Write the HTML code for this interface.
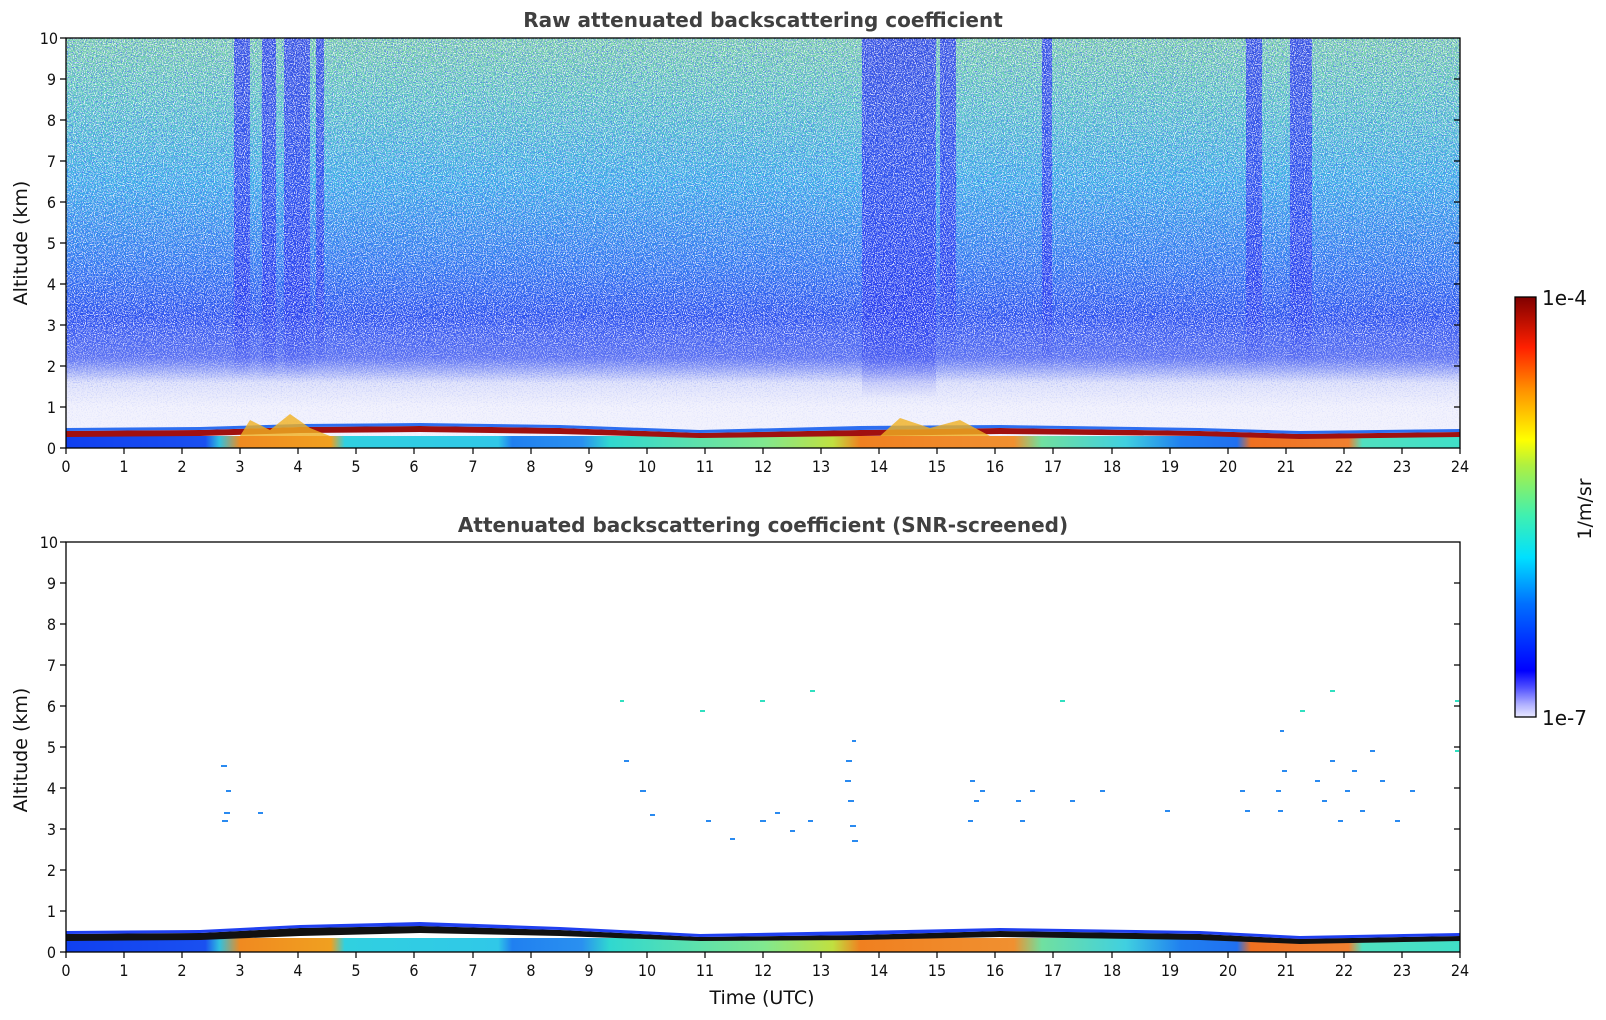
<!DOCTYPE html>
<html><head><meta charset="utf-8"><style>
html,body{margin:0;padding:0;background:#fff;}
svg{display:block;}
text{font-family:"DejaVu Sans","Liberation Sans",sans-serif;fill:#111;}
.t{font-size:16px;font-stretch:condensed;}
.ti{font-size:20px;font-weight:bold;fill:#404040;}
.lab{font-size:19px;}
</style></head><body>
<svg width="1606" height="1020" viewBox="0 0 1606 1020" xmlns="http://www.w3.org/2000/svg">
<defs>
<linearGradient id="bg" x1="0" y1="0" x2="0" y2="1">
<stop offset="0" stop-color="#7fd6a6"/>
<stop offset="0.15" stop-color="#62cfc0"/>
<stop offset="0.35" stop-color="#3cb4e6"/>
<stop offset="0.55" stop-color="#2f7cef"/>
<stop offset="0.68" stop-color="#2a50ee"/>
<stop offset="0.78" stop-color="#5f74f2"/>
<stop offset="0.84" stop-color="#dfe2fb"/>
<stop offset="0.9" stop-color="#f2f2fd"/>
<stop offset="1" stop-color="#f2f2fd"/>
</linearGradient>
<linearGradient id="fade" x1="0" y1="0" x2="0" y2="1">
<stop offset="0" stop-color="#fff"/>
<stop offset="0.72" stop-color="#fff"/>
<stop offset="0.86" stop-color="#fff" stop-opacity="0.2"/>
<stop offset="1" stop-color="#fff" stop-opacity="0"/>
</linearGradient>
<mask id="m1" maskUnits="userSpaceOnUse" x="66" y="38" width="1394" height="410">
<rect x="66" y="38" width="1394" height="410" fill="url(#fade)"/>
</mask>
<linearGradient id="str" x1="0" y1="0" x2="0" y2="1">
<stop offset="0" stop-color="#2430ee" stop-opacity="0.8"/>
<stop offset="0.75" stop-color="#2430ee" stop-opacity="0.75"/>
<stop offset="1" stop-color="#2430ee" stop-opacity="0"/>
</linearGradient>
<linearGradient id="bl" x1="0" y1="0" x2="1" y2="0">
<stop offset="0" stop-color="#1040f0"/>
<stop offset="0.1" stop-color="#1a50f0"/>
<stop offset="0.11" stop-color="#30c0e0"/>
<stop offset="0.125" stop-color="#f08a20"/>
<stop offset="0.19" stop-color="#f0a020"/>
<stop offset="0.2" stop-color="#30d0e0"/>
<stop offset="0.31" stop-color="#30c8e8"/>
<stop offset="0.32" stop-color="#2080f0"/>
<stop offset="0.37" stop-color="#2a90f0"/>
<stop offset="0.39" stop-color="#30d8d0"/>
<stop offset="0.5" stop-color="#80e890"/>
<stop offset="0.55" stop-color="#c0e040"/>
<stop offset="0.57" stop-color="#f08020"/>
<stop offset="0.68" stop-color="#f09030"/>
<stop offset="0.7" stop-color="#70e0a0"/>
<stop offset="0.76" stop-color="#40d0e0"/>
<stop offset="0.8" stop-color="#2080f0"/>
<stop offset="0.84" stop-color="#2070f0"/>
<stop offset="0.85" stop-color="#f07020"/>
<stop offset="0.92" stop-color="#f08030"/>
<stop offset="0.93" stop-color="#50e0c0"/>
<stop offset="1" stop-color="#40e0c8"/>
</linearGradient>
<linearGradient id="cb" x1="0" y1="1" x2="0" y2="0">
<stop offset="0" stop-color="#e8e8ff"/>
<stop offset="0.03" stop-color="#b0b0ff"/>
<stop offset="0.07" stop-color="#5050ff"/>
<stop offset="0.11" stop-color="#0000ff"/>
<stop offset="0.27" stop-color="#0070ff"/>
<stop offset="0.38" stop-color="#00e0ff"/>
<stop offset="0.48" stop-color="#40f0b0"/>
<stop offset="0.6" stop-color="#b0f040"/>
<stop offset="0.66" stop-color="#ffff00"/>
<stop offset="0.78" stop-color="#ff9000"/>
<stop offset="0.88" stop-color="#ff2000"/>
<stop offset="1" stop-color="#800000"/>
</linearGradient>
<filter id="spw" x="0" y="0" width="100%" height="100%">
<feTurbulence type="fractalNoise" baseFrequency="0.9" numOctaves="1" seed="3"/>
<feColorMatrix type="matrix" values="0 0 0 0 1  0 0 0 0 1  0 0 0 0 1  9 0 0 0 -4.6"/>
</filter>
<filter id="spb" x="0" y="0" width="100%" height="100%">
<feTurbulence type="fractalNoise" baseFrequency="0.8" numOctaves="1" seed="11"/>
<feColorMatrix type="matrix" values="0 0 0 0 0.08  0 0 0 0 0.15  0 0 0 0 0.95  0 9 0 0 -4.6"/>
</filter>
</defs>

<text class="ti" x="763" y="27" text-anchor="middle">Raw attenuated backscattering coefficient</text>
<text class="ti" x="763" y="532" text-anchor="middle">Attenuated backscattering coefficient (SNR-screened)</text>

<!-- TOP PLOT -->
<rect x="66" y="38" width="1394" height="410" fill="url(#bg)"/>
<g fill="url(#str)">
<rect x="234" y="38" width="16" height="340"/>
<rect x="262" y="38" width="14" height="340"/>
<rect x="284" y="38" width="26" height="340"/>
<rect x="316" y="38" width="8" height="330"/>
<rect x="862" y="38" width="74" height="360"/>
<rect x="940" y="38" width="16" height="320"/>
<rect x="1042" y="38" width="10" height="330"/>
<rect x="1246" y="38" width="16" height="330"/>
<rect x="1290" y="38" width="22" height="330"/>
</g>
<g mask="url(#m1)">
<rect x="66" y="38" width="1394" height="410" filter="url(#spb)" opacity="0.7"/>
<rect x="66" y="38" width="1394" height="410" filter="url(#spw)" opacity="0.75"/>
</g>
<rect x="66" y="436" width="1394" height="12" fill="url(#bl)"/>
<path d="M66 431 L200 430 L300 427 L420 426 L560 428 L700 433 L860 430 L1000 428 L1200 431 L1300 434 L1460 432 L1460 437 L1300 439 L1200 436 L1000 434 L860 436 L700 438 L560 434 L420 432 L300 433 L200 436 L66 437 Z" fill="#a01010"/>
<path d="M66 431 L200 430 L300 427 L420 426 L560 428 L700 433 L860 430 L1000 428 L1200 431 L1300 434 L1460 432 L1460 429 L1300 431 L1200 428 L1000 425 L860 426 L700 430 L560 425 L420 423 L300 424 L200 427 L66 428 Z" fill="#2d6ef0"/>
<path d="M240 436 L250 420 L270 430 L290 414 L310 428 L330 436 Z M880 436 L900 418 L930 428 L960 420 L990 436 Z" fill="#f0b020" opacity="0.8"/>

<!-- BOTTOM PLOT -->
<rect x="66" y="542" width="1394" height="410" fill="#fff"/>
<rect x="66" y="938" width="1394" height="14" fill="url(#bl)"/>
<path d="M66 934 L200 933 L300 928 L420 926 L560 930 L700 937 L860 935 L1000 931 L1200 934 L1300 939 L1460 936 L1460 941 L1300 944 L1200 940 L1000 937 L860 940 L700 941 L560 936 L420 933 L300 936 L200 940 L66 941 Z" fill="#111"/>
<path d="M66 934 L200 933 L300 928 L420 926 L560 930 L700 937 L860 935 L1000 931 L1200 934 L1300 939 L1460 936 L1460 933 L1300 936 L1200 931 L1000 928 L860 931 L700 934 L560 927 L420 922 L300 925 L200 930 L66 931 Z" fill="#2040f0"/>
<g fill="#2a8af0">
<rect x="222" y="820" width="6" height="2"/><rect x="224" y="812" width="6" height="2"/><rect x="226" y="790" width="5" height="2"/><rect x="221" y="765" width="6" height="2"/><rect x="258" y="812" width="5" height="2"/>
<rect x="624" y="760" width="5" height="2"/><rect x="640" y="790" width="6" height="2"/><rect x="650" y="814" width="5" height="2"/><rect x="706" y="820" width="5" height="2"/><rect x="730" y="838" width="5" height="2"/>
<rect x="760" y="820" width="6" height="2"/><rect x="775" y="812" width="5" height="2"/><rect x="790" y="830" width="5" height="2"/><rect x="808" y="820" width="5" height="2"/>
<rect x="845" y="780" width="6" height="2"/><rect x="848" y="800" width="6" height="2"/><rect x="850" y="825" width="6" height="2"/><rect x="852" y="840" width="6" height="2"/><rect x="846" y="760" width="6" height="2"/><rect x="852" y="740" width="4" height="2"/>
<rect x="970" y="780" width="5" height="2"/><rect x="974" y="800" width="5" height="2"/><rect x="980" y="790" width="5" height="2"/><rect x="968" y="820" width="5" height="2"/><rect x="1016" y="800" width="5" height="2"/><rect x="1020" y="820" width="5" height="2"/><rect x="1030" y="790" width="5" height="2"/>
<rect x="1070" y="800" width="5" height="2"/><rect x="1100" y="790" width="5" height="2"/><rect x="1165" y="810" width="5" height="2"/><rect x="1240" y="790" width="5" height="2"/><rect x="1245" y="810" width="5" height="2"/>
<rect x="1276" y="790" width="5" height="2"/><rect x="1278" y="810" width="5" height="2"/><rect x="1282" y="770" width="5" height="2"/><rect x="1280" y="730" width="4" height="2"/>
<rect x="1315" y="780" width="5" height="2"/><rect x="1322" y="800" width="5" height="2"/><rect x="1330" y="760" width="5" height="2"/><rect x="1338" y="820" width="5" height="2"/><rect x="1345" y="790" width="5" height="2"/><rect x="1352" y="770" width="5" height="2"/><rect x="1360" y="810" width="5" height="2"/><rect x="1370" y="750" width="5" height="2"/><rect x="1380" y="780" width="5" height="2"/><rect x="1395" y="820" width="5" height="2"/><rect x="1410" y="790" width="5" height="2"/>
</g>
<g fill="#30e0c0">
<rect x="700" y="710" width="5" height="2"/><rect x="760" y="700" width="5" height="2"/><rect x="810" y="690" width="5" height="2"/><rect x="1060" y="700" width="5" height="2"/><rect x="1300" y="710" width="5" height="2"/><rect x="1330" y="690" width="5" height="2"/><rect x="620" y="700" width="4" height="2"/><rect x="1455" y="700" width="4" height="2"/><rect x="1455" y="750" width="4" height="2"/>
</g>

<g fill="none" stroke="#000" stroke-width="1.3">
<rect x="66" y="38" width="1394" height="410"/>
<rect x="66" y="542" width="1394" height="410"/>
<rect x="1515" y="297" width="21" height="420" fill="url(#cb)"/>
</g>

<g stroke="#000" stroke-width="1.2">
<path d="M66 448v6M124 448v6M182 448v6M240 448v6M298 448v6M356 448v6M414 448v6M473 448v6M531 448v6M589 448v6M647 448v6M705 448v6M763 448v6M821 448v6M879 448v6M937 448v6M995 448v6M1053 448v6M1112 448v6M1170 448v6M1228 448v6M1286 448v6M1344 448v6M1402 448v6M1460 448v6"/>
<path d="M66 952v6M124 952v6M182 952v6M240 952v6M298 952v6M356 952v6M414 952v6M473 952v6M531 952v6M589 952v6M647 952v6M705 952v6M763 952v6M821 952v6M879 952v6M937 952v6M995 952v6M1053 952v6M1112 952v6M1170 952v6M1228 952v6M1286 952v6M1344 952v6M1402 952v6M1460 952v6"/>
<path d="M60 448h6M60 407h6M60 366h6M60 325h6M60 284h6M60 243h6M60 202h6M60 161h6M60 120h6M60 79h6M60 38h6"/>
<path d="M60 952h6M60 911h6M60 870h6M60 829h6M60 788h6M60 747h6M60 706h6M60 665h6M60 624h6M60 583h6M60 542h6"/>
<path d="M1454 407h6M1454 366h6M1454 325h6M1454 284h6M1454 243h6M1454 202h6M1454 161h6M1454 120h6M1454 79h6"/>
<path d="M1454 911h6M1454 870h6M1454 829h6M1454 788h6M1454 747h6M1454 706h6M1454 665h6M1454 624h6M1454 583h6"/>
</g>

<g text-anchor="end">
<text class="t" x="56" y="454">0</text><text class="t" x="56" y="413">1</text><text class="t" x="56" y="372">2</text><text class="t" x="56" y="331">3</text><text class="t" x="56" y="290">4</text><text class="t" x="56" y="249">5</text><text class="t" x="56" y="208">6</text><text class="t" x="56" y="167">7</text><text class="t" x="56" y="126">8</text><text class="t" x="56" y="85">9</text><text class="t" x="58" y="44">10</text>
<text class="t" x="56" y="958">0</text><text class="t" x="56" y="917">1</text><text class="t" x="56" y="876">2</text><text class="t" x="56" y="835">3</text><text class="t" x="56" y="794">4</text><text class="t" x="56" y="753">5</text><text class="t" x="56" y="712">6</text><text class="t" x="56" y="671">7</text><text class="t" x="56" y="630">8</text><text class="t" x="56" y="589">9</text><text class="t" x="58" y="548">10</text>
</g>
<g text-anchor="middle">
<text class="t" x="66" y="472">0</text><text class="t" x="124" y="472">1</text><text class="t" x="182" y="472">2</text><text class="t" x="240" y="472">3</text><text class="t" x="298" y="472">4</text><text class="t" x="356" y="472">5</text><text class="t" x="414" y="472">6</text><text class="t" x="473" y="472">7</text><text class="t" x="531" y="472">8</text><text class="t" x="589" y="472">9</text><text class="t" x="647" y="472">10</text><text class="t" x="705" y="472">11</text><text class="t" x="763" y="472">12</text><text class="t" x="821" y="472">13</text><text class="t" x="879" y="472">14</text><text class="t" x="937" y="472">15</text><text class="t" x="995" y="472">16</text><text class="t" x="1053" y="472">17</text><text class="t" x="1112" y="472">18</text><text class="t" x="1170" y="472">19</text><text class="t" x="1228" y="472">20</text><text class="t" x="1286" y="472">21</text><text class="t" x="1344" y="472">22</text><text class="t" x="1402" y="472">23</text><text class="t" x="1460" y="472">24</text>
<text class="t" x="66" y="976">0</text><text class="t" x="124" y="976">1</text><text class="t" x="182" y="976">2</text><text class="t" x="240" y="976">3</text><text class="t" x="298" y="976">4</text><text class="t" x="356" y="976">5</text><text class="t" x="414" y="976">6</text><text class="t" x="473" y="976">7</text><text class="t" x="531" y="976">8</text><text class="t" x="589" y="976">9</text><text class="t" x="647" y="976">10</text><text class="t" x="705" y="976">11</text><text class="t" x="763" y="976">12</text><text class="t" x="821" y="976">13</text><text class="t" x="879" y="976">14</text><text class="t" x="937" y="976">15</text><text class="t" x="995" y="976">16</text><text class="t" x="1053" y="976">17</text><text class="t" x="1112" y="976">18</text><text class="t" x="1170" y="976">19</text><text class="t" x="1228" y="976">20</text><text class="t" x="1286" y="976">21</text><text class="t" x="1344" y="976">22</text><text class="t" x="1402" y="976">23</text><text class="t" x="1460" y="976">24</text>
</g>

<text class="lab" x="762" y="1004" text-anchor="middle">Time (UTC)</text>
<text class="lab" transform="translate(27,243) rotate(-90)" text-anchor="middle">Altitude (km)</text>
<text class="lab" transform="translate(27,750) rotate(-90)" text-anchor="middle">Altitude (km)</text>

<text class="lab" x="1542" y="305" style="font-size:20px">1e-4</text>
<text class="lab" x="1542" y="725" style="font-size:20px">1e-7</text>
<text class="lab" transform="translate(1591,509) rotate(-90)" text-anchor="middle">1/m/sr</text>
</svg>
</body></html>
